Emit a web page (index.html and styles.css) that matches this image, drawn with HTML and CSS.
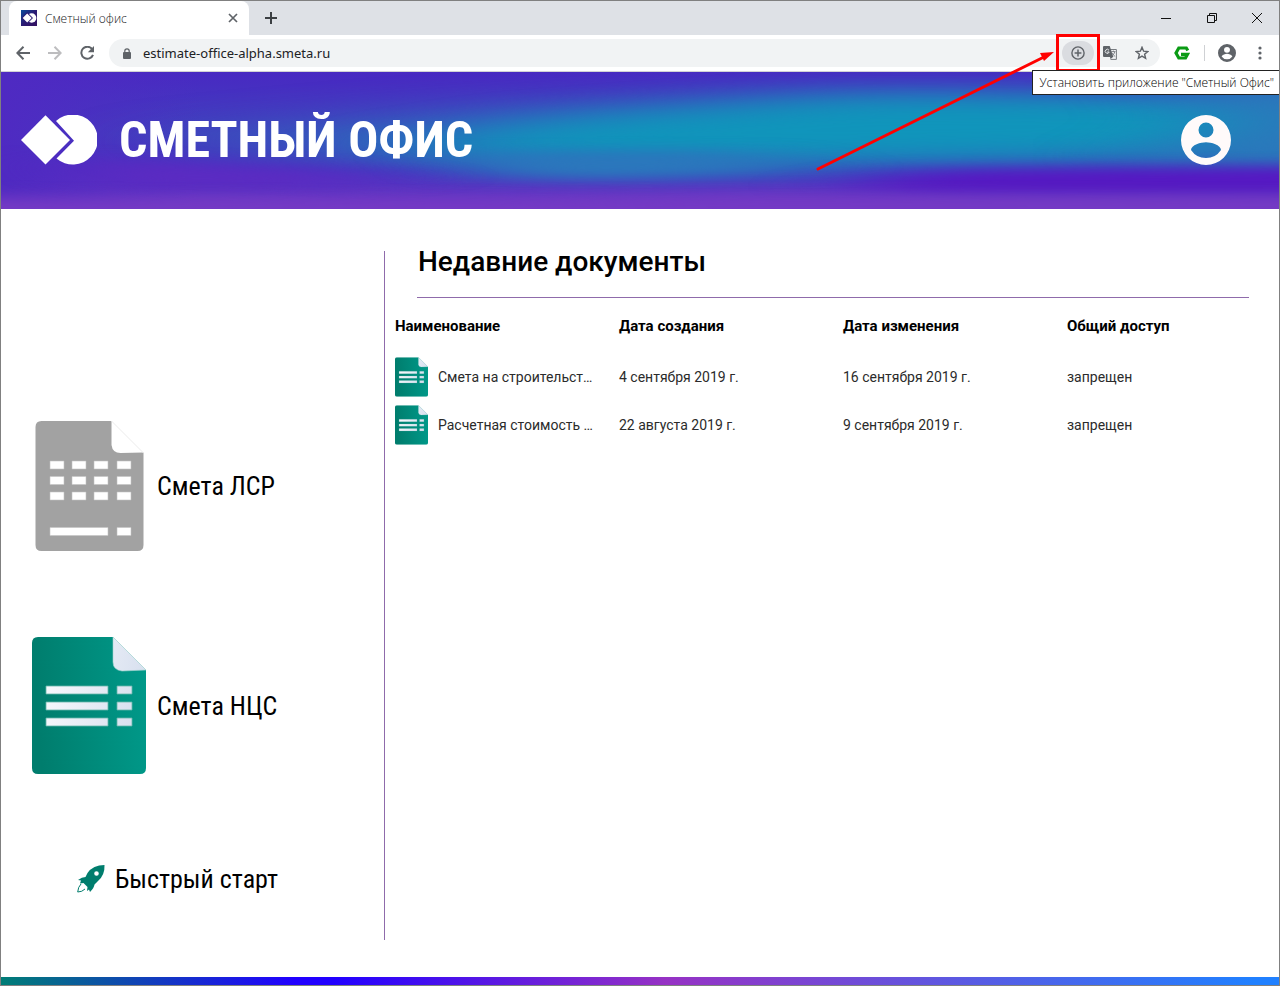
FILE: index.html
```
<!DOCTYPE html>
<html lang="ru">
<head>
<meta charset="utf-8">
<title>Сметный офис</title>
<link rel="stylesheet" href="styles.css">
</head>
<body>
<svg class="defs" aria-hidden="true">
  <defs>
    <linearGradient id="green" x1="0" y1="0.1" x2="1" y2="0"><stop offset="0" stop-color="#007d6d"/><stop offset="1" stop-color="#009a8a"/></linearGradient>
    <linearGradient id="paper" x1="0" y1="0" x2="114" y2="30" gradientUnits="userSpaceOnUse"><stop offset="0.1" stop-color="#fbfcfe"/><stop offset="1" stop-color="#d8e0ef"/></linearGradient>
  </defs>
  <symbol id="doc" viewBox="0 0 114 137">
    <path fill="url(#green)" d="M6 0H81L114 33V131Q114 137 108 137H6Q0 137 0 131V6Q0 0 6 0Z"/>
    <path fill="#fff" d="M81 0H114V33Z"/>
    <path fill="url(#paper)" stroke="#a5d5d0" stroke-width="0.6" d="M81 0L114 33L90 34Q81 33 81 25Z"/>
    <path fill="url(#paper)" stroke="#66b5aa" stroke-width="0.8" d="M14 49H76V57H14ZM85 49H100V57H85ZM14 65H76V73H14ZM85 65H100V73H85ZM14 81H76V89H14ZM85 81H100V89H85Z"/>
  </symbol>
</svg>
<div class="window">
  <header class="tabs">
    <div class="tab">
      <svg width="16" height="16" viewBox="0 0 16 16"><defs><linearGradient id="fav" x2="1" y2="1"><stop stop-color="#0a4c9c"/><stop offset=".5" stop-color="#2b1b74"/><stop offset="1" stop-color="#35105f"/></linearGradient></defs><path fill="url(#fav)" d="M0 0H16V16H0Z"/><circle cx="10.7" cy="8" r="4.7" fill="#fff"/><path d="M6.2 2.3L12 8L6.2 13.7L.6 8Z" fill="#2b1b74"/><path d="M6.2 3.4L10.7 8L6.2 12.6L1.7 8Z" fill="#fff"/></svg>
      <span class="tab-title">Сметный офис</span>
      <button class="icon-btn" aria-label="Закрыть вкладку"><svg width="10" height="10" viewBox="0 0 10 10"><path d="M1 1L9 9M9 1L1 9" stroke="#5f6368" stroke-width="1.7"/></svg></button>
    </div>
    <button class="icon-btn new-tab" aria-label="Новая вкладка"><svg width="12" height="12" viewBox="0 0 12 12"><path d="M6 0V12M0 6H12" stroke="#3c4043" stroke-width="2"/></svg></button>
    <div class="win-controls">
      <button class="icon-btn" aria-label="Свернуть"><svg width="10" height="10" viewBox="0 0 10 10"><path d="M0 5.5H10" stroke="#111"/></svg></button>
      <button class="icon-btn" aria-label="Восстановить"><svg width="10" height="10" viewBox="0 0 10 10"><path d="M.5 2.5H7.5V9.5H.5ZM2.5 2.5V.5H9.5V7.5H7.5" fill="none" stroke="#111"/></svg></button>
      <button class="icon-btn" aria-label="Закрыть"><svg width="10" height="10" viewBox="0 0 10 10"><path d="M0 0L10 10M10 0L0 10" stroke="#111"/></svg></button>
    </div>
  </header>
  <div class="toolbar">
    <button class="icon-btn nav-btn" aria-label="Назад"><svg width="14" height="14" viewBox="0 0 14 14"><path d="M14 7H1.5M7.5 .8L1.3 7L7.5 13.2" fill="none" stroke="#5f6368" stroke-width="2"/></svg></button>
    <button class="icon-btn nav-btn" aria-label="Вперёд"><svg width="14" height="14" viewBox="0 0 14 14"><path d="M0 7H12.5M6.5 .8L12.7 7L6.5 13.2" fill="none" stroke="#bdbdbf" stroke-width="2"/></svg></button>
    <button class="icon-btn nav-btn" aria-label="Обновить"><svg width="14" height="14" viewBox="1 1 14 14"><path d="M13.2 4.2A6 6 0 1 0 14 9.8" fill="none" stroke="#5f6368" stroke-width="2"/><path d="M15 1V7.2H8.8Z" fill="#5f6368"/></svg></button>
    <div class="address">
      <svg width="8" height="11" viewBox="0 0 8 11"><rect y="4" width="8" height="7" rx="1" fill="#5f6368"/><path d="M1.8 4.5V3A2.2 2.2 0 0 1 6.2 3V4.5" fill="none" stroke="#5f6368" stroke-width="1.2"/></svg>
      <input class="url" aria-label="Адрес" value="estimate-office-alpha.smeta.ru">
      <button class="icon-btn install" aria-label="Установить приложение"><svg width="14" height="14" viewBox="0 0 14 14"><circle cx="7" cy="7" r="6.1" fill="none" stroke="#5f6368" stroke-width="1.4"/><path d="M7 3.6V10.4M3.6 7H10.4" stroke="#5f6368" stroke-width="1.5"/></svg></button>
      <button class="icon-btn translate" aria-label="Перевести"><svg width="14" height="14" viewBox="0 0 14 14"><path d="M5 3.5H13.4V13.4H7.5" fill="#f1f3f4" stroke="#777b80"/><path d="M1 0H6.7L10.4 11H1Q0 11 0 10V1Q0 0 1 0Z" fill="#5f6368"/><path d="M6 4.3A2 2 0 1 0 6.2 6H4.2" fill="none" stroke="#e8eaed"/><path d="M8.2 5.6H12.5M10.4 4.6V5.8M11.8 5.8Q11 8.4 9.5 9.4M8.9 6.8Q10 9 12.2 10.5" fill="none" stroke="#777b80" stroke-width=".9"/><path d="M7.5 13L10 11H7Z" fill="#5f6368"/></svg></button>
      <button class="icon-btn star" aria-label="Добавить в закладки"><svg width="14" height="14" viewBox="0 0 14 14"><path d="M7 1.3L8.6 5.2L12.8 5.5L9.6 8.2L10.6 12.3L7 10.1L3.4 12.3L4.4 8.2L1.2 5.5L5.4 5.2Z" fill="none" stroke="#5f6368" stroke-width="1.4"/></svg></button>
    </div>
    <button class="icon-btn" aria-label="Расширение"><svg width="16" height="14" viewBox="0 0 16 14"><path d="M13.800 4.500L12.300 2H4.800L2 7L4.800 12H11.500L13.500 8.300H7" fill="none" stroke="#0a9b14" stroke-width="3.2"/></svg></button>
    <span class="divider"></span>
    <button class="icon-btn profile" aria-label="Профиль"><svg width="18" height="18" viewBox="2 2 20 20"><path fill="#5f6368" d="M12 2a10 10 0 1 0 0 20 10 10 0 0 0 0-20zm0 3.2a3.3 3.3 0 1 1 0 6.6 3.3 3.3 0 0 1 0-6.6zM12 19a7 7 0 0 1-6-3c1-2.200 4-3.100 6-3.100s5 .9 6 3.100a7 7 0 0 1-6 3z"/></svg></button>
    <button class="icon-btn" aria-label="Меню"><svg width="4" height="14" viewBox="0 0 4 14"><g fill="#5f6368"><circle cx="2" cy="2" r="1.6"/><circle cx="2" cy="7" r="1.6"/><circle cx="2" cy="12" r="1.6"/></g></svg></button>
  </div>
  <div class="banner">
    <svg class="banner-bg" viewBox="0 0 1278 137" preserveAspectRatio="none" aria-hidden="true">
      <defs>
        <linearGradient id="sky" x2="0" y2="1"><stop offset="0" stop-color="#4829c2"/><stop offset=".45" stop-color="#4140be"/><stop offset=".72" stop-color="#4a2ec2"/><stop offset="1" stop-color="#7139c4"/></linearGradient>
        <linearGradient id="edge"><stop offset="0" stop-color="#4f2ac2"/><stop offset="1" stop-color="#4f2ac2" stop-opacity="0"/></linearGradient>
        <filter id="soft" x="-30%" y="-80%" width="160%" height="260%" color-interpolation-filters="sRGB"><feGaussianBlur stdDeviation="60 12"/></filter>
        <filter id="fine" x="-40%" y="-100%" width="180%" height="300%" color-interpolation-filters="sRGB"><feGaussianBlur stdDeviation="50 7"/></filter>
        <filter id="wide" x="-30%" y="-60%" width="160%" height="220%" color-interpolation-filters="sRGB"><feGaussianBlur stdDeviation="90 16"/></filter>
      </defs>
      <path fill="url(#sky)" d="M0 0H1278V137H0Z"/>
      <path fill="url(#edge)" d="M0 0H200V137H0Z"/>
      <path fill="#2f68bd" filter="url(#wide)" d="M240 62L480 40L800 20L1500 26V95L600 98L260 82Z"/>
      <path fill="#1095bb" filter="url(#soft)" d="M410 70L560 46L860 24L1060 26L1500 34V66L1060 84L800 88L600 88L410 84Z"/>
      <path fill="#2b78bb" filter="url(#soft)" d="M1180 10L1500 10V92L1140 92L1230 50Z"/>
      <path fill="#2b78bc" filter="url(#fine)" d="M460 82L740 80L800 96L660 106L500 106Z"/>
      <path fill="#5b2bc2" filter="url(#fine)" d="M60 86L250 94L400 104L300 118L100 118Z"/>
      <path fill="#5618c2" filter="url(#fine)" d="M860 110L920 98L1500 94V122L870 122Z"/>
      <path fill="#743ac4" filter="url(#fine)" d="M-200 122L100 126L480 128L740 124L1500 126V170H-200Z"/>
    </svg>
    <a class="brand" href="#">
      <svg width="76" height="50" viewBox="0 0 76 50"><path d="M35 6A25 25 0 1 1 35.500 43.500L53 25.700Z" fill="#fff"/><path d="M24.500 .3L49 25L24.500 49.500L0 25Z" fill="#fff"/></svg>
      <span class="brand-name">СМЕТНЫЙ ОФИС</span>
    </a>
    <button class="icon-btn user" aria-label="Учётная запись"><svg width="50" height="50" viewBox="2 2 20 20"><path fill="#fffafa" d="M12 2a10 10 0 1 0 0 20 10 10 0 0 0 0-20zm0 3a3 3 0 1 1 0 6 3 3 0 0 1 0-6zM12 19.200a7.200 7.200 0 0 1-6-3.220c.03-1.990 4-3.080 6-3.080s5.970 1.090 6 3.080a7.200 7.200 0 0 1-6 3.220z"/></svg></button>
  </div>
  <main class="content">
    <nav class="side">
      <a class="side-item" href="#">
        <span class="side-icon"><svg width="110" height="130" viewBox="0 0 110 130"><path fill="#a2a2a2" d="M7.500 0H77.500V24Q78.500 32 86.500 32L109.500 31.500V124Q109.500 130 103.500 130H7.500Q1.500 130 1.500 124V6Q1.500 0 7.500 0Z"/><path d="M77.500 0L109.500 32" stroke="#ebebeb"/><path fill="#fff" stroke="#c4c4c4" stroke-width=".6" d="M16 40H30V48H16ZM38 40H52V48H38ZM60 40H74V48H60ZM83 40H97V48H83ZM16 55.500H30V63.500H16ZM38 55.500H52V63.500H38ZM60 55.500H74V63.500H60ZM83 55.500H97V63.500H83ZM16 71H30V79H16ZM38 71H52V79H38ZM60 71H74V79H60ZM83 71H97V79H83ZM16 106.500H74V114.500H16ZM83 106.500H97V114.500H83Z"/></svg></span>
        <span>Смета ЛСР</span>
      </a>
      <a class="side-item" href="#">
        <span class="side-icon"><svg width="114" height="137"><use href="#doc"/></svg></span>
        <span>Смета НЦС</span>
      </a>
      <a class="side-item quick" href="#">
        <svg width="28" height="28" viewBox="0 0 28 28"><path fill="#007d6d" fill-rule="evenodd" d="M27.500 0Q28 10 21 16L17.500 19.500Q17 23 13 27L12 24.500L10 26L10.500 22L6.500 18L3 18.500L4 15.500L1 15Q5 12 8.500 12L10.500 8Q16 0 27.500 0ZM19.500 6.200A2.300 2.300 0 1 0 19.500 10.800A2.300 2.300 0 1 0 19.500 6.200Z"/><path fill="none" stroke="#007d6d" stroke-width="1" d="M4 19Q1 22 .7 27Q5 27 8 24"/></svg>
        <span>Быстрый старт</span>
      </a>
    </nav>
    <section class="recent">
      <h1>Недавние документы</h1>
      <table>
        <thead><tr><th>Наименование</th><th>Дата создания</th><th>Дата изменения</th><th>Общий доступ</th></tr></thead>
        <tbody>
          <tr><td><a class="doc" href="#"><svg width="33" height="40" viewBox="0 0 114 137"><use href="#doc"/></svg><span>Смета на строительст…</span></a></td><td>4 сентября 2019 г.</td><td>16 сентября 2019 г.</td><td>запрещен</td></tr>
          <tr><td><a class="doc" href="#"><svg width="33" height="40" viewBox="0 0 114 137"><use href="#doc"/></svg><span>Расчетная стоимость …</span></a></td><td>22 августа 2019 г.</td><td>9 сентября 2019 г.</td><td>запрещен</td></tr>
        </tbody>
      </table>
    </section>
  </main>
  <footer class="stripe"></footer>
  <div class="callout">
    <svg class="arrow" width="240" height="120" viewBox="0 0 240 120" aria-hidden="true"><path d="M3 118L230 5.500" stroke="#f00" stroke-width="3" stroke-linecap="round"/><path d="M239 1L229 10L225 2Z" fill="#f00"/></svg>
    <div class="frame"></div>
    <div class="tooltip" role="tooltip">Установить приложение "Сметный Офис"</div>
  </div>
</div>
</body>
</html>
```
FILE: styles.css
```
* { box-sizing: border-box; }
body { margin: 0; font-family: Roboto, "Liberation Sans", sans-serif; color: #000; background: #fff; }
svg { display: block; flex: none; }
a { color: inherit; text-decoration: none; }
.defs { position: absolute; width: 0; height: 0; }
.window { position: relative; display: flex; flex-direction: column; min-height: 100vh; border: 1px solid #808080; overflow: hidden; }
.icon-btn { display: flex; align-items: center; justify-content: center; padding: 0; border: 0; background: none; flex: none; }

.tabs { display: flex; align-items: center; height: 34px; padding-left: 8px; background: #dee1e6; }
.tab { display: flex; align-items: center; gap: 8px; width: 240px; height: 34px; padding: 0 11px 0 12px; background: #fff; border-radius: 8px 8px 0 0; }
.tab-title { flex: 1; font: 300 12px "Open Sans", "Noto Sans", sans-serif; color: #202124; }
.new-tab { margin-left: 16px; }
.win-controls { display: flex; margin-left: auto; height: 28px; }
.win-controls .icon-btn { width: 46px; }
.win-controls .icon-btn:last-child { width: 44px; }

.toolbar { display: flex; align-items: center; height: 37px; padding: 0 17px 0 6px; border-bottom: 1px solid #d2d2d4; }
.nav-btn { width: 32px; height: 32px; }
.address { display: flex; align-items: center; flex: 1; height: 28px; margin: 0 14px 0 6px; padding: 0 11px 0 14px; border-radius: 14px; background: #f1f3f4; }
.url { flex: 1; min-width: 0; margin-left: 12px; padding: 0; border: 0; outline: 0; background: none; font: 13px "Noto Sans", sans-serif; color: #202124; }
.install { width: 32px; height: 24px; border-radius: 12px; background: #dadce0; }
.translate { margin-left: 9px; }
.star { margin-left: 18px; }
.divider { width: 1px; height: 16px; margin: 0 13px 0 14px; background: #cfd1d4; }
.profile { margin-right: 22px; }

.banner { position: relative; display: flex; align-items: center; justify-content: space-between; height: 137px; padding: 0 48px 2px 20px; background: #4829c2; }
.banner-bg { position: absolute; inset: 0; width: 100%; height: 100%; }
.brand { position: relative; display: flex; align-items: center; gap: 22px; color: #fff; }
.brand-name { font: bold 50px/60px "Roboto Condensed", Roboto, sans-serif; white-space: nowrap; }
.user { position: relative; }

.content { display: flex; flex: 1; padding: 42px 30px 37px 30px; }
.side { display: flex; flex-direction: column; width: 354px; padding-top: 170px; border-right: 1px solid #8f6bab; }
.side-item { display: flex; align-items: center; gap: 10px; font: 26px/32px "Roboto Condensed", Roboto, sans-serif; }
.side-item + .side-item { margin-top: 86px; }
.side-icon { display: flex; justify-content: center; width: 116px; }
.side-item.quick { padding: 3px 0 0 46px; }
.recent { flex: 1; min-width: 0; }
h1 { margin: 0 0 0 32px; padding: 0 1px 19px; height: 47px; font: 500 28px/22px Roboto, sans-serif; border-bottom: 1px solid #8f6bab; }
table { width: calc(100% + 32px); table-layout: fixed; border-collapse: collapse; margin-top: 1px; font-size: 14px; }
th { height: 54px; padding: 0 0 0 10px; text-align: left; font-weight: 700; font-size: 15px; }
td { height: 48px; padding: 0 0 0 10px; color: #2b2b2b; }
.doc { display: flex; align-items: center; gap: 10px; }
.doc span { white-space: nowrap; }
.stripe { height: 8px; background: linear-gradient(90deg, #007d76, #2100ff 23%, #2100ff 26%, #9632c4 52%, #2080ff 98%); }

.callout { position: absolute; top: 33px; right: 0; width: 244px; }
.frame { position: absolute; top: 0; left: 21px; width: 44px; height: 38px; border: 3px solid #f00; }
.arrow { position: absolute; top: 17px; right: 224px; }
.tooltip { position: absolute; top: 36px; right: 0; padding: 0 5px 0 7px; border: 1px solid #222; border-right: 0; background: #fff; font: 300 12px/23px "Open Sans", "Noto Sans", sans-serif; color: #000; white-space: nowrap; }
```
